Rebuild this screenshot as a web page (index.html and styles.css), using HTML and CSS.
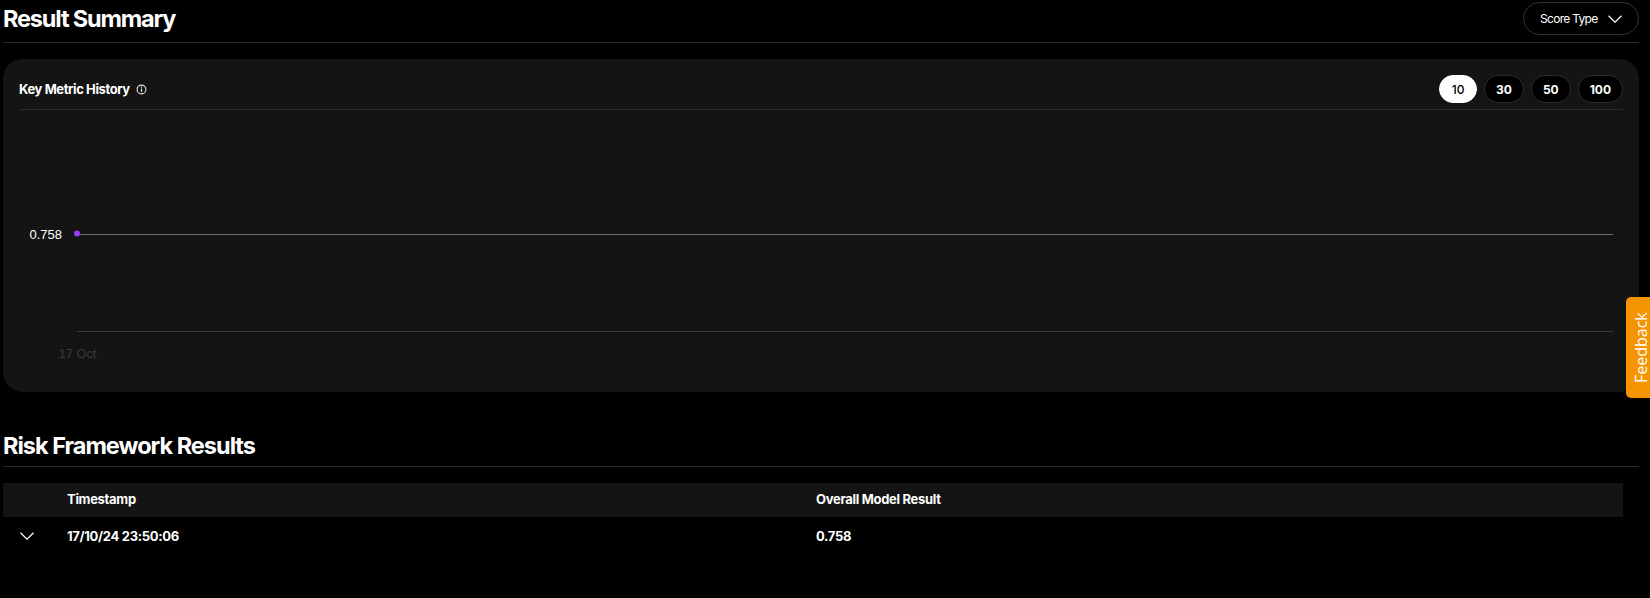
FILE: index.html
```html
<!DOCTYPE html>
<html lang="en">
<head>
  <meta charset="UTF-8" />
  <meta name="viewport" content="width=device-width, initial-scale=1.0"/>
  <title>Result Summary</title>
  <link rel="stylesheet" href="styles.css">
</head>
<body>

  <div class="page">
    <div class="section-head first">
      <h2>Result Summary</h2>
      <button class="score-btn">
        Score Type
        <svg width="14" height="8" viewBox="0 0 14 8"><path d="M.5 .8 7 7.2 13.5 .8" fill="none" stroke="#fff" stroke-width="1.2"/></svg>
      </button>
    </div>

    <div class="card">
      <div class="card-head">
        <div class="card-title">
          Key Metric History
          <svg width="11" height="11" viewBox="0 0 11 11"><circle cx="5.5" cy="5.5" r="4.4" fill="none" stroke="#e4e4e4" stroke-width="1.1"/><path d="M5.5 4.6v3.5M5.5 2.6v1.2" stroke="#e4e4e4" stroke-width="1.2"/></svg>
        </div>
        <div class="pills">
          <button class="pill active">10</button>
          <button class="pill">30</button>
          <button class="pill">50</button>
          <button class="pill">100</button>
        </div>
      </div>
      <svg class="chart" width="1604" height="266" viewBox="0 0 1604 266">
        <line x1="58" y1="124.5" x2="1594" y2="124.5" stroke="#6f6f6f" stroke-width="1"/>
        <line x1="58" y1="221.5" x2="1594" y2="221.5" stroke="#3a3a3a" stroke-width="1"/>
        <circle cx="58" cy="123.5" r="3" fill="#913cf0"/>
        <text class="y-label" x="43" y="128.5" text-anchor="end">0.758</text>
        <text class="x-label" x="58.5" y="248" text-anchor="middle">17 Oct</text>
      </svg>
    </div>

    <div class="section-head second">
      <h2>Risk Framework Results</h2>
    </div>

    <div class="table">
      <div class="row row-head">
        <div></div>
        <div>Timestamp</div>
        <div>Overall Model Result</div>
      </div>
      <div class="row row-body">
        <div class="toggle">
          <svg width="14" height="8" viewBox="0 0 14 8"><path d="M.5 .8 7 7.2 13.5 .8" fill="none" stroke="#fff" stroke-width="1.2"/></svg>
        </div>
        <div>17/10/24 23:50:06</div>
        <div>0.758</div>
      </div>
    </div>
  </div>

  <div class="feedback">Feedback</div>

</body>
</html>
```

FILE: styles.css
```css
body {
  margin: 0;
  background: #000;
  color: #fff;
  font-family: 'Inter', 'Liberation Sans', sans-serif;
  overflow: hidden;
}

.page {
  width: 1636px;
  margin-left: 3px;
}

.section-head {
  display: flex;
  justify-content: space-between;
  align-items: center;
  height: 42px;
  border-bottom: 1px solid #2b2b2b;
}

.section-head.second {
  height: 49px;
  margin-top: 25px;
}

h2 {
  margin: 0;
  font-size: 23.5px;
  font-weight: 700;
  letter-spacing: -1px;
  position: relative;
}

.section-head.first h2 {
  top: -3px;
  letter-spacing: -1.15px;
}

.section-head.second h2 {
  top: 4px;
}

.score-btn {
  display: flex;
  align-items: center;
  gap: 10px;
  height: 33px;
  width: 116px;
  margin-bottom: 5px;
  padding: 0 0 0 16px;
  background: #000;
  color: #fff;
  border: 1px solid #333;
  border-radius: 17px;
  font-family: inherit;
  font-size: 12px;
  letter-spacing: -0.7px;
}

.card {
  margin-top: 16px;
  height: 333px;
  padding: 16px 16px 0;
  box-sizing: border-box;
  background: #141414;
  border-radius: 20px;
}

.card-head {
  display: flex;
  justify-content: space-between;
  height: 34px;
  border-bottom: 1px solid #2b2b2b;
}

.card-title {
  display: flex;
  align-items: center;
  gap: 6px;
  height: 28px;
  font-size: 13px;
  font-weight: 700;
  letter-spacing: -0.4px;
}

.pills {
  display: flex;
  gap: 7px;
  height: 28px;
}

.pill {
  min-width: 38px;
  padding: 0 11px;
  background: #000;
  color: #fff;
  border: 1px solid #2b2b2b;
  border-radius: 14px;
  font-family: inherit;
  font-size: 12px;
  font-weight: 700;
}

.pill.active {
  background: #fff;
  color: #000;
  border-color: #fff;
  font-weight: 500;
}

.chart {
  display: block;
}

.y-label {
  font-family: 'Liberation Sans', sans-serif;
  font-size: 13px;
  fill: #fff;
}

.x-label {
  font-family: 'Liberation Sans', sans-serif;
  font-size: 12.8px;
  fill: #3a3a3a;
}

.table {
  width: 1620px;
  margin-top: 16px;
  font-size: 13px;
  font-weight: 700;
  letter-spacing: -0.3px;
}

.row {
  display: grid;
  grid-template-columns: 64px 749px 1fr;
  align-items: center;
  box-sizing: border-box;
}

.row-head {
  height: 34px;
  padding-bottom: 2px;
  background: #141414;
}

.row-body {
  height: 36px;
  padding-top: 2px;
}

.toggle {
  display: flex;
  padding-left: 17px;
}

.feedback {
  position: absolute;
  top: 297px;
  right: 0;
  width: 24px;
  height: 101px;
  box-sizing: border-box;
  padding-right: 6px;
  display: flex;
  align-items: center;
  justify-content: center;
  background: #f59300;
  color: #fff;
  border-radius: 0 5px 5px 0;
  font-family: 'Open Sans', sans-serif;
  font-size: 16px;
  writing-mode: vertical-rl;
  transform: rotate(180deg);
}
```
